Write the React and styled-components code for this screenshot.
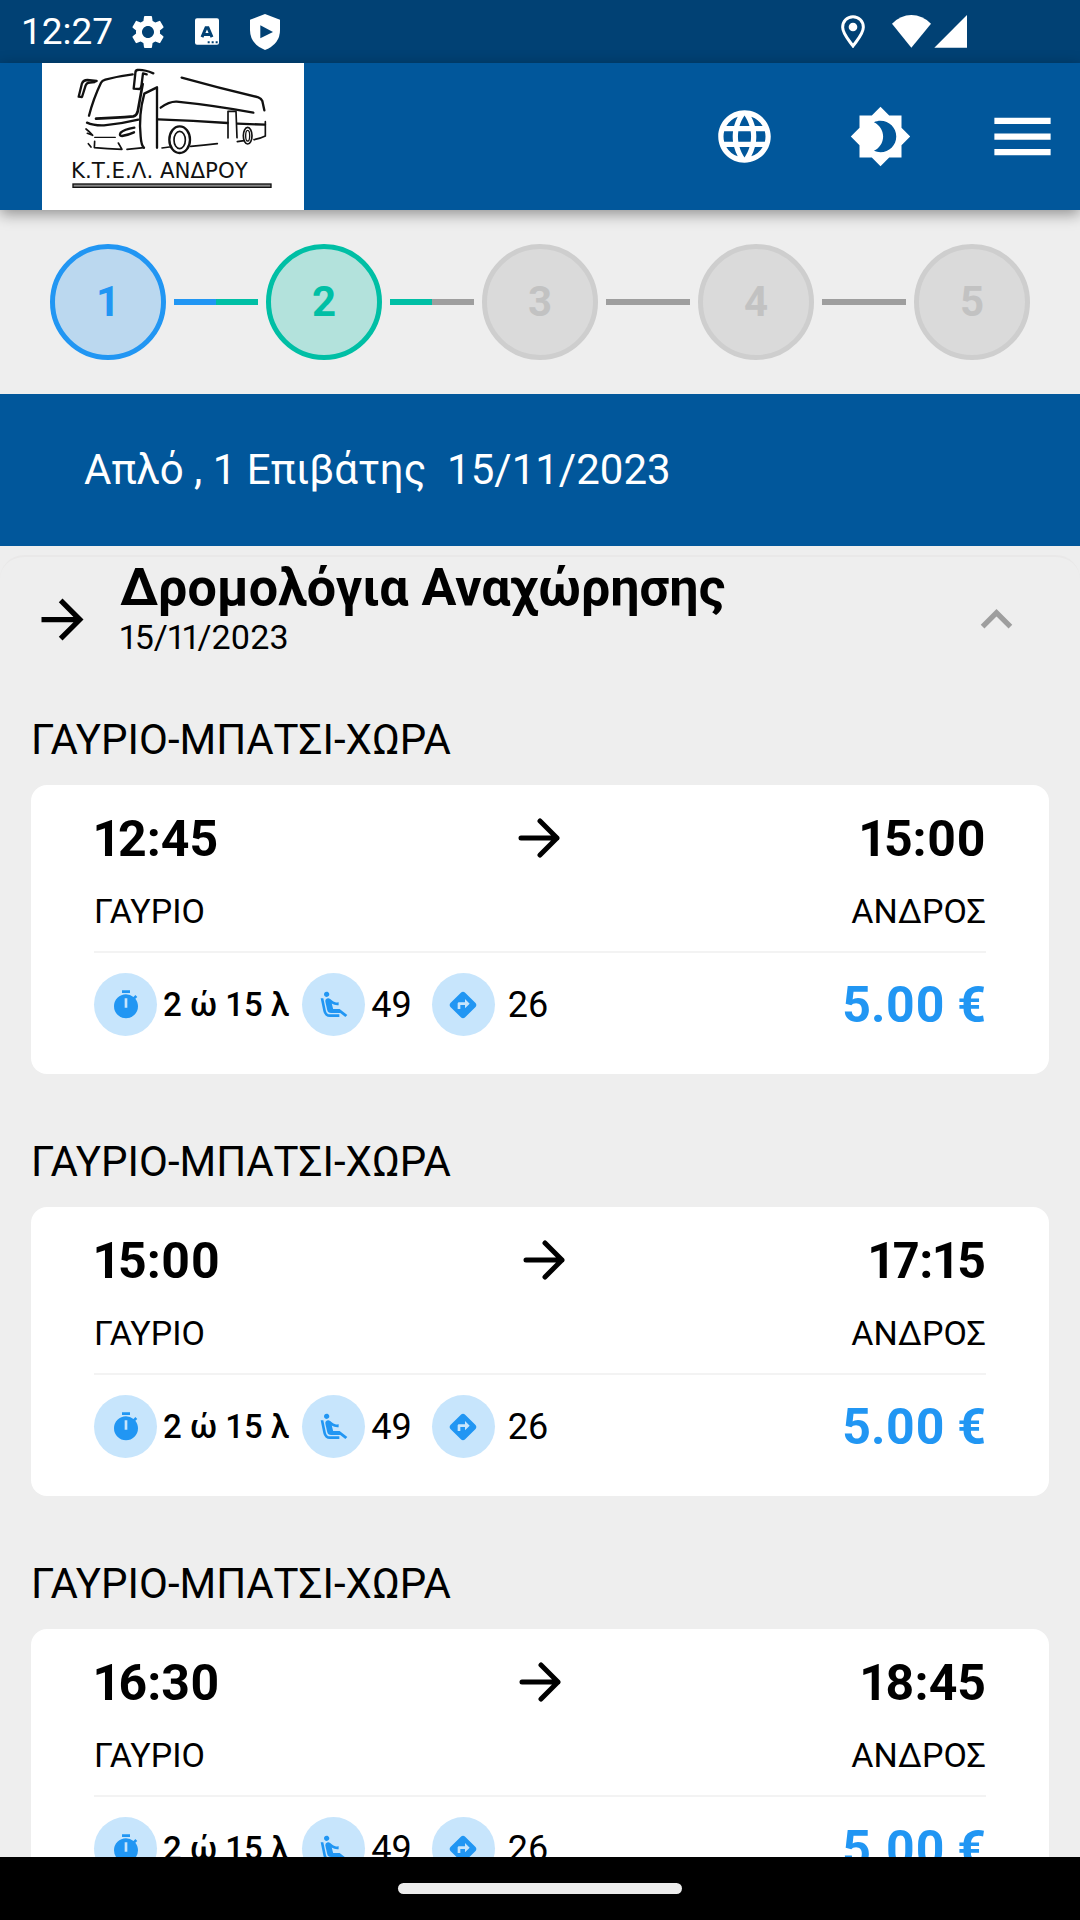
import { useState } from "react";
import styled, { createGlobalStyle } from "styled-components";
import {
  MdAirlineSeatReclineExtra,
  MdArrowForward,
  MdBrightness4,
  MdDirections,
  MdKeyboardArrowUp,
  MdLanguage,
  MdMenu,
  MdSettings,
} from "react-icons/md";

const GlobalStyle = createGlobalStyle`
  * {
    box-sizing: border-box;
  }
  body {
    margin: 0;
    background: #eeeeee;
    color: #000;
    font-family: Roboto, "Noto Sans", sans-serif;
  }
  h1, h2, p, ol {
    margin: 0;
    padding: 0;
  }
  svg {
    display: block;
    flex-shrink: 0;
  }
`;

const Screen = styled.div`
  display: flex;
  flex-direction: column;
  height: 100vh;
  overflow: hidden;
`;

const StatusBar = styled.div`
  display: flex;
  flex-shrink: 0;
  align-items: center;
  justify-content: space-between;
  height: 63px;
  padding: 0 113px 0 21px;
  background: #014174;
  color: #fff;
`;

const StatusGroup = styled.div`
  display: flex;
  align-items: center;
  gap: 27px;
`;

const Clock = styled.span`
  margin-right: -12px;
  font-size: 37px;
  line-height: 44px;
`;

const Header = styled.header`
  position: relative;
  z-index: 1;
  display: flex;
  flex-shrink: 0;
  align-items: center;
  justify-content: space-between;
  height: 147px;
  padding: 0 20px 0 42px;
  background: #01579b;
  box-shadow: 0 4px 14px rgba(0, 0, 0, 0.4);
`;

const Logo = styled.a`
  display: block;
  background: #fff;
`;

const Actions = styled.nav`
  display: flex;
  align-items: center;
  gap: 73px;
`;

const IconButton = styled.button`
  display: flex;
  padding: 0;
  border: 0;
  background: none;
  color: ${(props) => props.$color || "#fff"};
  cursor: pointer;
`;

const Stepper = styled.ol`
  display: flex;
  flex-shrink: 0;
  align-items: center;
  height: 184px;
  padding: 0 50px;
  list-style: none;
`;

const StepItem = styled.li`
  display: flex;
  align-items: center;
  flex: ${(props) => (props.$last ? "none" : 1)};
`;

const stepColors = {
  done: { line: "#2196f3", border: "#2196f3", fill: "#bbd8ef", text: "#2196f3" },
  current: { line: "#00bfa5", border: "#00bfa5", fill: "#b3e2dc", text: "#00bfa5" },
  todo: { line: "#9e9e9e", border: "#cecece", fill: "#dadada", text: "#c2c2c2" },
};

const StepCircle = styled.span`
  display: flex;
  flex-shrink: 0;
  align-items: center;
  justify-content: center;
  width: 116px;
  height: 116px;
  border: 5px solid ${(props) => stepColors[props.$state].border};
  border-radius: 50%;
  background: ${(props) => stepColors[props.$state].fill};
  color: ${(props) => stepColors[props.$state].text};
  font-size: 42px;
  font-weight: 700;
  line-height: 50px;
`;

const StepLine = styled.span`
  flex: 1;
  height: 6px;
  margin: 0 8px;
  background: linear-gradient(
    to right,
    ${(props) => stepColors[props.$from].line} 50%,
    ${(props) => stepColors[props.$to].line} 50%
  );
`;

const Summary = styled.p`
  flex-shrink: 0;
  padding: 51px 84px;
  background: #01579b;
  color: #fff;
  font-size: 42px;
  line-height: 50px;
  white-space: pre-wrap;
`;

const Panel = styled.main`
  flex: 1;
  min-height: 0;
  margin-top: 9px;
  overflow-y: auto;
  scrollbar-width: none;
  border: 2px solid #e9e8e8;
  border-width: 2px 0 0;
  border-radius: 24px 24px 0 0;
`;

const PanelHeader = styled.div`
  display: flex;
  align-items: center;
  height: 125px;
  padding: 0 52px 0 31px;
`;

const PanelTitles = styled.div`
  flex: 1;
  align-self: flex-start;
  padding: 2px 0 0 26px;
`;

const Title = styled.h1`
  font-size: 52px;
  font-weight: 700;
  line-height: 58px;
`;

const Small = styled.p`
  font-size: 34px;
  font-variant-numeric: proportional-nums;
  line-height: 40px;
`;

const TripList = styled.div`
  display: flex;
  flex-direction: column;
  gap: 63px;
  padding: 33px 31px;
`;

const RouteName = styled.h2`
  margin-bottom: 20px;
  font-size: 42px;
  font-weight: 400;
  line-height: 50px;
`;

const Card = styled.article`
  padding: 24px 63px 38px;
  border-radius: 16px;
  background: #fff;
`;

const Row = styled.div`
  display: flex;
  align-items: center;
  justify-content: space-between;
`;

const Cities = styled(Row)`
  margin-top: 22px;
  padding-bottom: 20px;
  border-bottom: 2px solid #f3f3f3;
`;

const Details = styled(Row)`
  margin-top: 20px;
`;

const Big = styled.span`
  color: ${(props) => props.$color || "#000"};
  font-size: 50px;
  font-variant-numeric: proportional-nums;
  font-weight: 700;
  line-height: 60px;
`;

const Facts = styled.div`
  display: flex;
  align-items: center;
`;

const Fact = styled.div`
  display: flex;
  align-items: center;
  gap: ${(props) => props.$gap}px;
  margin-right: ${(props) => props.$after || 0}px;
  font-size: ${(props) => (props.$strong ? 33 : 36)}px;
  font-weight: ${(props) => (props.$strong ? 500 : 400)};
  line-height: 42px;
`;

const Badge = styled.span`
  display: flex;
  align-items: center;
  justify-content: center;
  width: 63px;
  height: 63px;
  border-radius: 50%;
  background: #c7e5fc;
  color: #2196f3;
`;

const NavBar = styled.div`
  display: flex;
  flex-shrink: 0;
  justify-content: center;
  height: 63px;
  padding-top: 26px;
  background: #000;
`;

const Handle = styled.span`
  width: 284px;
  height: 11px;
  border-radius: 6px;
  background: #ececec;
`;

function BusLogo() {
  return (
    <svg width="262" height="147" viewBox="126 189 786 441" fill="none" stroke="#111" strokeWidth="7" strokeLinecap="round" strokeLinejoin="round">
      {/* mirrors */}
      <path d="M290 243 L262 240 Q250 240 246 250 L236 290 L246 291 L257 256 Q260 248 270 248 L284 246" />
      <path d="M460 220 Q432 208 412 210 Q406 211 406 220 L401 266 L419 267 Q424 262 425 252 L429 220 L440 223" />
      {/* windscreen and front */}
      <path d="M267 347 Q280 296 303 248 Q306 242 316 239 Q355 228 398 223" />
      <path d="M288 356 Q350 353 400 349 Q410 347 413 335 L428 252" strokeWidth="8" />
      <path d="M261 368 Q280 377 312 376 Q362 372 415 359" />
      <path d="M258 387 Q270 396 278 406 L262 400" strokeWidth="5" />
      <path d="M284 412 H346" strokeWidth="4" />
      <path d="M403 383 Q372 388 362 398 Q356 408 366 408 Q385 405 402 397" />
      <path d="M284 424 L283 443 Q320 447 366 448 L355 429" strokeWidth="5" />
      <path d="M265 431 L273 441 M381 448 L432 443" strokeWidth="5" />
      {/* door */}
      <path d="M432 443 Q424 438 422 410 Q415 345 433 281 L471 262 V443" />
      {/* side */}
      <path d="M545 233 Q660 265 775 292 Q784 295 787 303 L793 331" />
      <path d="M482 323 Q508 304 530 305 Q640 316 760 338" />
      <path d="M474 358 Q580 361 683 369 M712 371 L795 374" />
      <path d="M796 365 V408 Q780 416 762 419 M712 425 L732 422" strokeWidth="5" />
      <path d="M684 414 V334 H708 L711 413" strokeWidth="5" />
      <path d="M486 444 L508 441 M572 439 Q610 436 652 431" strokeWidth="5" />
      {/* wheels */}
      <ellipse cx="539" cy="419" rx="31" ry="40" />
      <ellipse cx="539" cy="420" rx="17" ry="26" strokeWidth="5" />
      <ellipse cx="743" cy="407" rx="13" ry="25" strokeWidth="5" />
      <ellipse cx="743" cy="407" rx="6" ry="16" strokeWidth="4" />
      <text x="213" y="533" fill="#111" stroke="none" fontFamily="'DejaVu Sans', sans-serif" fontSize="64">
        Κ.Τ.Ε.Λ. ΑΝΔΡΟΥ
      </text>
      <rect x="219" y="552" width="594" height="10" fill="#888" strokeWidth="4" strokeLinejoin="miter" />
    </svg>
  );
}

function KeyboardIcon() {
  return (
    <svg width="24" height="27" viewBox="0 0 72 80">
      <rect width="72" height="80" rx="6" fill="#fff" />
      <path d="M21 57 L33 29 H39 L51 57 M27 49 H45" fill="none" stroke="#014174" strokeWidth="9" />
      <path d="M38 69h6v6h-6zM50 69h6v6h-6zM62 69h6v6h-6z" fill="#014174" />
    </svg>
  );
}

function ShieldIcon() {
  return (
    <svg width="36" height="36" viewBox="-12 0 108 108">
      <path d="M45 0 L90 17 V48 Q90 90 45 108 Q0 90 0 48 V17 Z" fill="#fff" />
      <path d="M31 34 L69 54 L31 73 Z" fill="#014174" />
    </svg>
  );
}

function PinIcon() {
  return (
    <svg width="24" height="33" viewBox="0 0 72 99">
      <path d="M36 5 C18 5 5 19 5 37 C5 57 24 76 36 93 C48 76 67 57 67 37 C67 19 54 5 36 5 Z" fill="none" stroke="#fff" strokeWidth="9" />
      <circle cx="36" cy="36" r="13" fill="#fff" />
    </svg>
  );
}

function SignalIcons() {
  return (
    <svg width="75" height="33" viewBox="0 0 225 99" fill="#fff">
      <path d="M58 98 L0 26 Q26 0 58 0 Q91 0 117 26 Z" />
      <path d="M225 0 V98 H127 Z" />
    </svg>
  );
}

function TimerIcon() {
  return (
    <svg width="32" height="32" viewBox="0 0 24 24" fill="currentColor">
      <path d="M19.03 7.39l1.42-1.42c-.45-.51-.9-.97-1.41-1.41L17.62 6A8.96 8.96 0 0 0 12 4a9 9 0 1 0 9 9c0-2.12-.74-4.07-1.97-5.61M13 14h-2V7h2zm2-13H9v2h6z" />
    </svg>
  );
}

function TripArrow() {
  return (
    <svg width="42" height="42" viewBox="0 0 42 42" fill="none" stroke="#000" strokeWidth="5" strokeLinecap="round" strokeLinejoin="round">
      <path d="M3 20H39M22 3l17 17-17 17" />
    </svg>
  );
}

const steps = ["done", "current", "todo", "todo", "todo"];

const trips = [
  { departure: "12:45", arrival: "15:00" },
  { departure: "15:00", arrival: "17:15" },
  { departure: "16:30", arrival: "18:45" },
];

function Trip({ departure, arrival }) {
  return (
    <section>
      <RouteName>ΓΑΥΡΙΟ-ΜΠΑΤΣΙ-ΧΩΡΑ</RouteName>
      <Card>
        <Row>
          <Big>{departure}</Big>
          <TripArrow />
          <Big>{arrival}</Big>
        </Row>
        <Cities>
          <Small>ΓΑΥΡΙΟ</Small>
          <Small>ΑΝΔΡΟΣ</Small>
        </Cities>
        <Details>
          <Facts>
            <Fact $gap={6} $after={13} $strong>
              <Badge>
                <TimerIcon />
              </Badge>
              2 ώ 15 λ
            </Fact>
            <Fact $gap={6} $after={20}>
              <Badge>
                <MdAirlineSeatReclineExtra size={32} />
              </Badge>
              49
            </Fact>
            <Fact $gap={13}>
              <Badge>
                <MdDirections size={32} />
              </Badge>
              26
            </Fact>
          </Facts>
          <Big $color="#2196f3">5.00 €</Big>
        </Details>
      </Card>
    </section>
  );
}

export default function App() {
  const [open, setOpen] = useState(true);

  return (
    <>
      <GlobalStyle />
      <Screen>
        <StatusBar>
          <StatusGroup>
            <Clock>12:27</Clock>
            <MdSettings size={40} />
            <KeyboardIcon />
            <ShieldIcon />
          </StatusGroup>
          <StatusGroup>
            <PinIcon />
            <SignalIcons />
          </StatusGroup>
        </StatusBar>
        <Header>
          <Logo href="#" aria-label="Κ.Τ.Ε.Λ. Άνδρου">
            <BusLogo />
          </Logo>
          <Actions>
            <IconButton aria-label="Γλώσσα">
              <MdLanguage size={63} />
            </IconButton>
            <IconButton aria-label="Θέμα">
              <MdBrightness4 size={63} />
            </IconButton>
            <IconButton aria-label="Μενού">
              <MdMenu size={75} />
            </IconButton>
          </Actions>
        </Header>
        <Stepper>
          {steps.map((state, i) => (
            <StepItem key={i} $last={i === steps.length - 1}>
              <StepCircle $state={state}>{i + 1}</StepCircle>
              {i < steps.length - 1 && <StepLine $from={state} $to={steps[i + 1]} />}
            </StepItem>
          ))}
        </Stepper>
        <Summary>{"Απλό , 1 Επιβάτης  15/11/2023"}</Summary>
        <Panel>
          <PanelHeader>
            <MdArrowForward size={63} />
            <PanelTitles>
              <Title>Δρομολόγια Αναχώρησης</Title>
              <Small>15/11/2023</Small>
            </PanelTitles>
            <IconButton $color="#9e9e9e" aria-label="Δρομολόγια" aria-expanded={open} onClick={() => setOpen(!open)}>
              <MdKeyboardArrowUp size={63} />
            </IconButton>
          </PanelHeader>
          {open && (
            <TripList>
              {trips.map((trip) => (
                <Trip key={trip.departure} {...trip} />
              ))}
            </TripList>
          )}
        </Panel>
        <NavBar>
          <Handle />
        </NavBar>
      </Screen>
    </>
  );
}
